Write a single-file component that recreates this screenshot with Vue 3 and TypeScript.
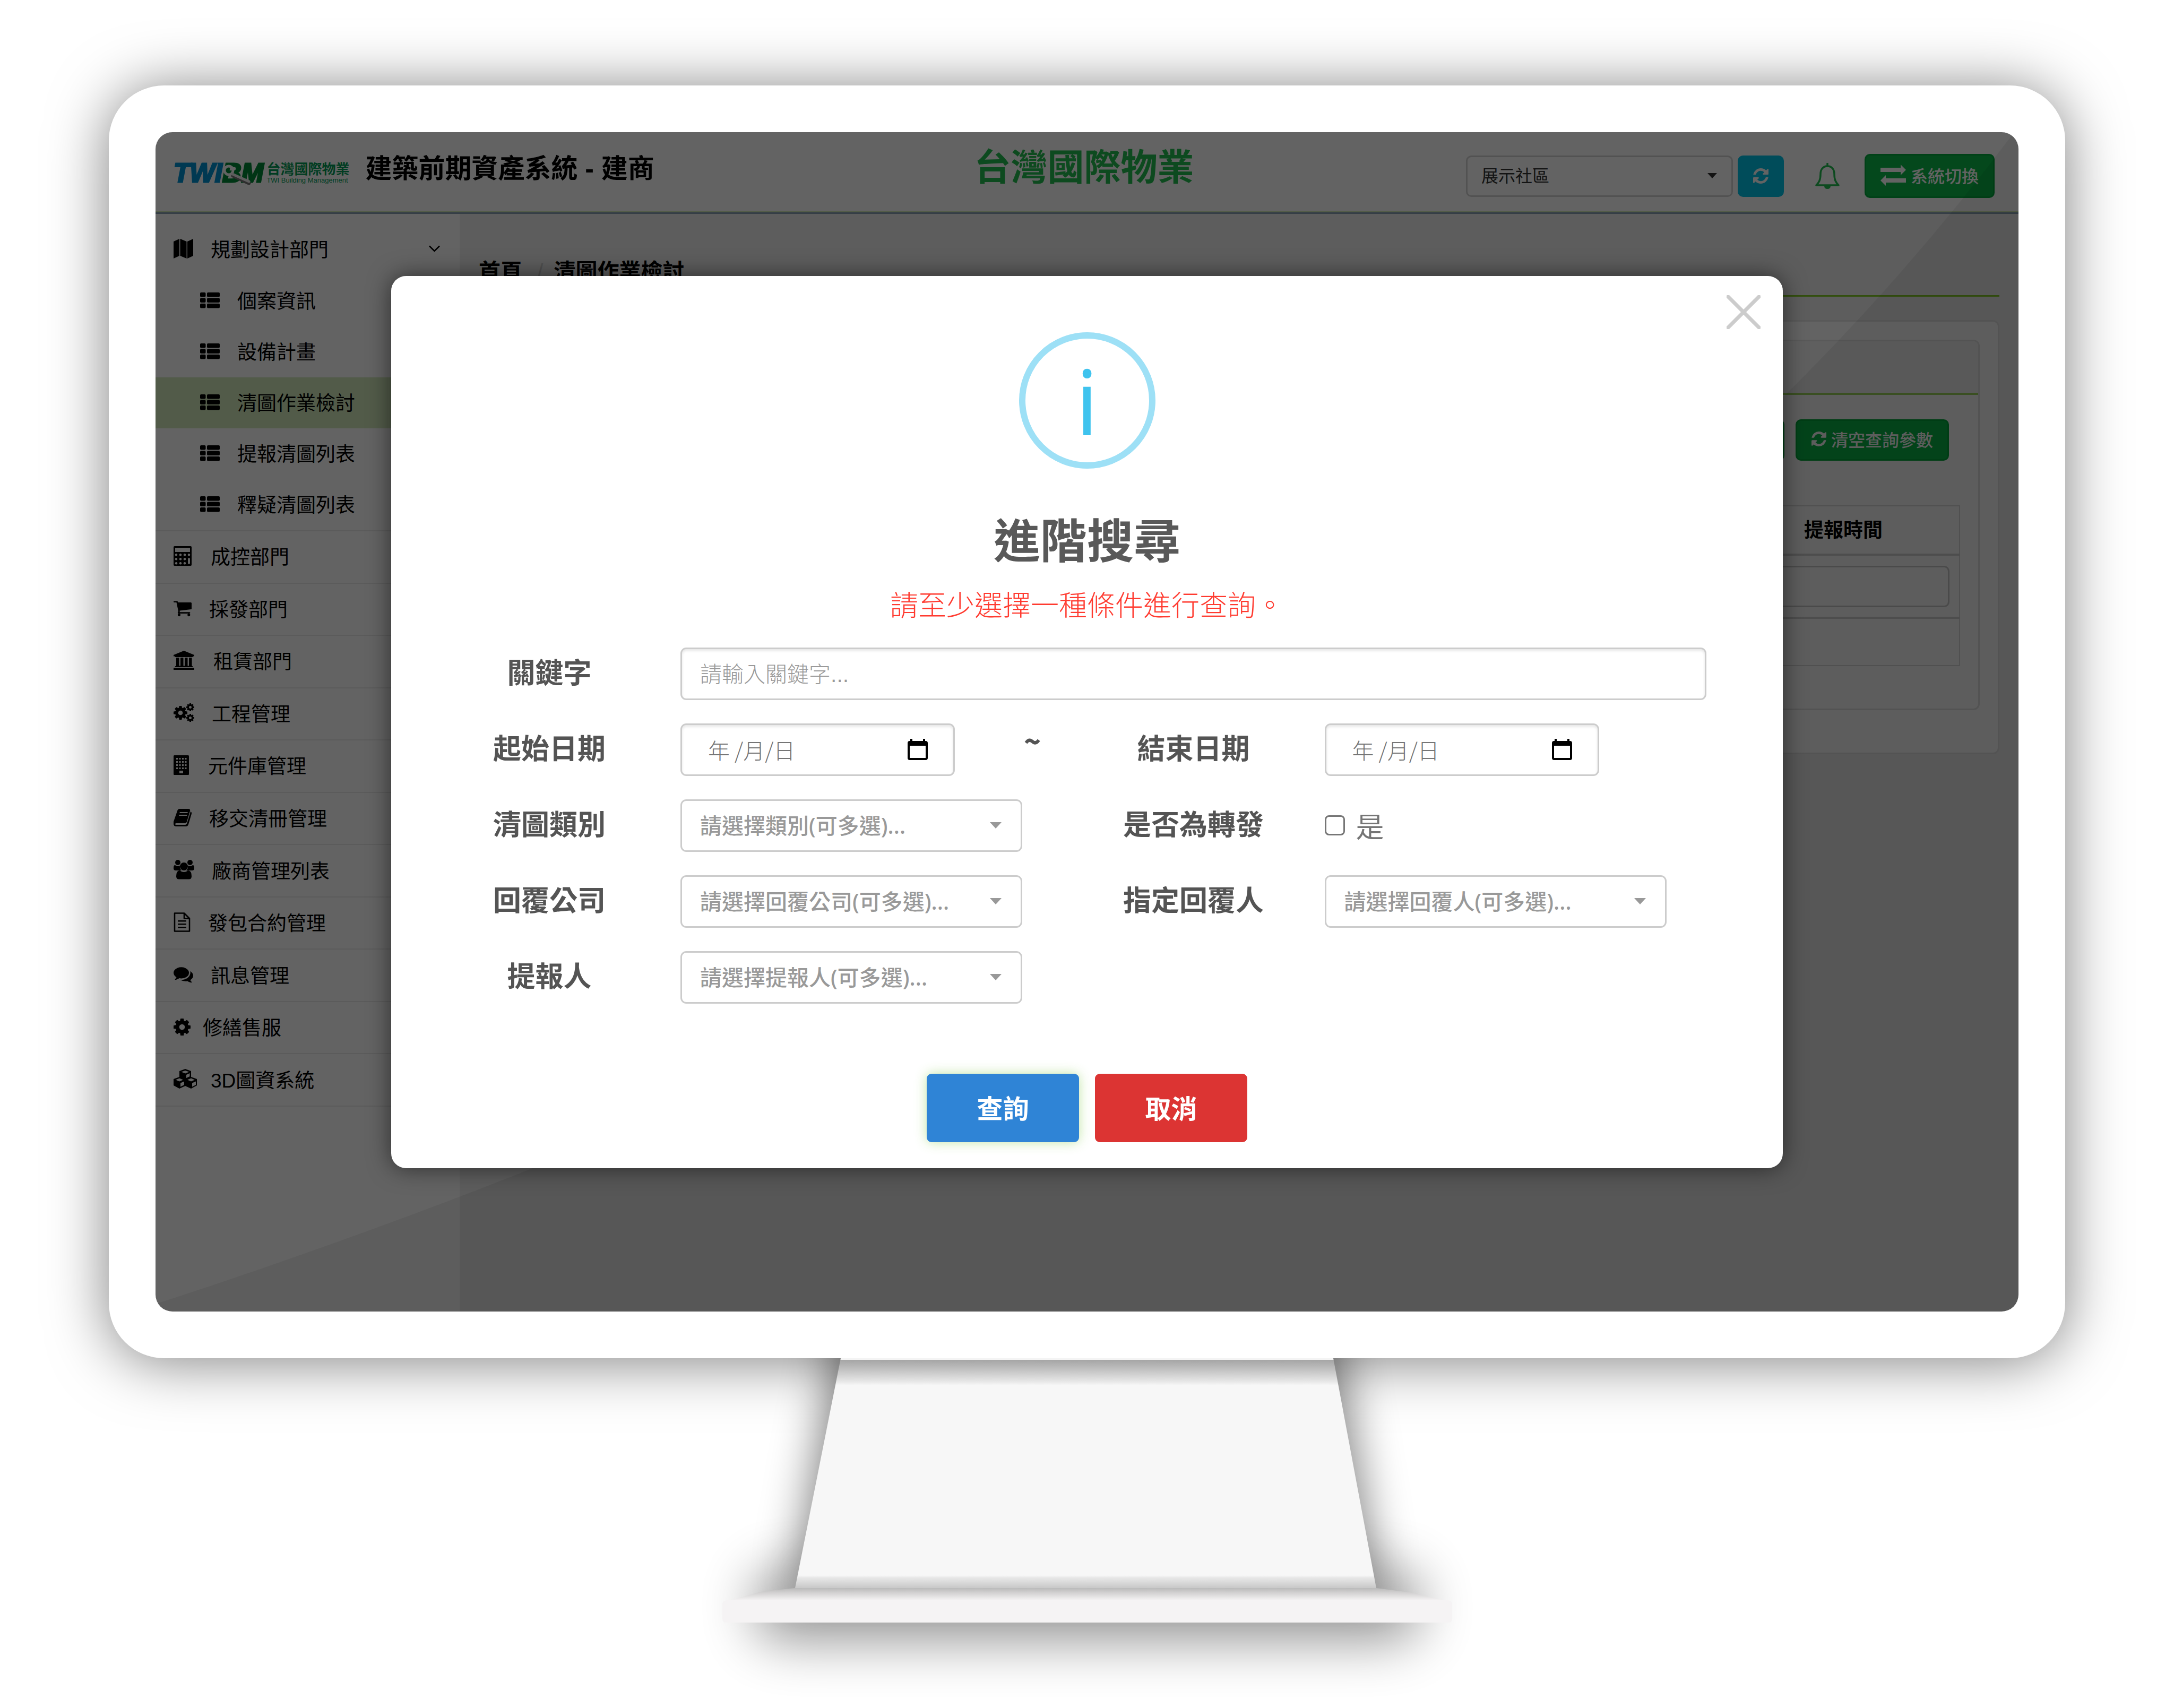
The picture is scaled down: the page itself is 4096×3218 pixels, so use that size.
<script setup lang="ts">
import { ref } from 'vue'

interface MenuItem {
  label: string
  icon: string
  width: number
  spacing?: 'wide' | 'tight' | 'snug'
}

const subItems = ['個案資訊', '設備計畫', '清圖作業檢討', '提報清圖列表', '釋疑清圖列表']
const activeItem = '清圖作業檢討'

const menuItems: MenuItem[] = [
  { label: '成控部門', icon: 'calculator', width: 34, spacing: 'wide' },
  { label: '採發部門', icon: 'cart', width: 34 },
  { label: '租賃部門', icon: 'bank', width: 39, spacing: 'wide' },
  { label: '工程管理', icon: 'cogs', width: 39 },
  { label: '元件庫管理', icon: 'building', width: 29, spacing: 'wide' },
  { label: '移交清冊管理', icon: 'book', width: 34 },
  { label: '廠商管理列表', icon: 'users', width: 39 },
  { label: '發包合約管理', icon: 'file', width: 32 },
  { label: '訊息管理', icon: 'comments', width: 37 },
  { label: '修繕售服', icon: 'cog', width: 32, spacing: 'tight' },
  { label: '3D圖資系統', icon: 'cubes', width: 44, spacing: 'snug' },
]

const keyword = ref('')
const startDate = ref('')
const endDate = ref('')
const forwarded = ref(false)
</script>

<template>
  <svg class="sprite" aria-hidden="true">
    <symbol id="i-map" viewBox="0 0 37 37">
      <path d="M0 5 11 0v32L0 37zM12.500 0l12 5v32l-12-5zM26 5l11-5v32l-11 5z" />
    </symbol>
    <symbol id="i-list" viewBox="0 0 37 37">
      <rect x="0" y="4" width="10.500" height="8.500" rx="2" /><rect x="13" y="4" width="24" height="8.500" rx="2" />
      <rect x="0" y="14.500" width="10.500" height="8.500" rx="2" /><rect x="13" y="14.500" width="24" height="8.500" rx="2" />
      <rect x="0" y="25" width="10.500" height="8.500" rx="2" /><rect x="13" y="25" width="24" height="8.500" rx="2" />
    </symbol>
    <symbol id="i-calculator" viewBox="0 0 34 37">
      <path fill-rule="evenodd" d="M2 0h30a2 2 0 0 1 2 2v33a2 2 0 0 1-2 2H2a2 2 0 0 1-2-2V2a2 2 0 0 1 2-2zM3 3v8h28V3zM5 14a2.300 2.300 0 1 0 .01 0zM13 14a2.300 2.300 0 1 0 .01 0zM21 14a2.300 2.300 0 1 0 .01 0zM29 14a2.300 2.300 0 1 0 .01 0zM5 22a2.300 2.300 0 1 0 .01 0zM13 22a2.300 2.300 0 1 0 .01 0zM21 22a2.300 2.300 0 1 0 .01 0zM27 24q0-2 2-2t2 2v8q0 2-2 2t-2-2zM5 30a2.300 2.300 0 1 0 .01 0zM13 30a2.300 2.300 0 1 0 .01 0zM21 30a2.300 2.300 0 1 0 .01 0z" />
    </symbol>
    <symbol id="i-cart" viewBox="64 0 1664 1792">
      <path d="M704 1536q0 52-38 90t-90 38-90-38-38-90 38-90 90-38 90 38 38 90zm896 0q0 52-38 90t-90 38-90-38-38-90 38-90 90-38 90 38 38 90zm128-1088v512q0 24-16.500 42.500t-40.500 21.500l-1044 122q13 60 13 70 0 16-24 64h920q26 0 45 19t19 45-19 45-45 19h-1024q-26 0-45-19t-19-45q0-11 8-31.500t16-36 21.500-40 15.500-29.500l-177-823h-204q-26 0-45-19t-19-45 19-45 45-19h256q16 0 28.500 6.500t19.500 15.500 13 24.500 8 26 5.500 29.500 4.500 26h1201q26 0 45 19t19 45z" />
    </symbol>
    <symbol id="i-bank" viewBox="0 0 39 37">
      <path d="M19.500 0 39 8v2.500h-2.500q0 1.500-1.500 1.500H4q-1.500 0-1.500-1.500H0V8zM5 13h5.500v15.500H13V13h5.500v15.500H21V13h5.500v15.500H29V13h5.500v15.500q2 0 2 2.500h-34q0-2.500 2.500-2.500zM0 32.500h39V36H0z" />
    </symbol>
    <symbol id="i-gear" viewBox="128 128 1536 1536">
      <path d="M1152 896q0-106-75-181t-181-75-181 75-75 181 75 181 181 75 181-75 75-181zm512-109v222q0 12-8 23t-20 13l-185 28q-19 54-39 91 35 50 107 138 10 12 10 25t-9 23q-27 37-99 108t-94 71q-12 0-26-9l-138-108q-44 23-91 38-16 136-29 186-7 28-36 28h-222q-14 0-24.500-8.500t-11.500-21.500l-28-184q-49-16-90-37l-141 107q-10 9-25 9-14 0-25-11-126-114-165-168-7-10-7-23 0-12 8-23 15-21 51-66.500t54-70.500q-27-50-41-99l-183-27q-13-2-21-12.500t-8-23.500v-222q0-12 8-23t19-13l186-28q14-46 39-92-40-57-107-138-10-12-10-24 0-10 9-23 26-36 98.500-107.500t94.500-71.500q13 0 26 10l138 107q44-23 91-38 16-136 29-186 7-28 36-28h222q14 0 24.500 8.500t11.500 21.500l28 184q49 16 90 37l142-107q9-9 24-9 13 0 25 10 129 119 165 170 7 8 7 22 0 12-8 23-15 21-51 66.500t-54 70.500q26 50 41 98l183 28q13 2 21 12.500t8 23.500z" />
    </symbol>
    <symbol id="i-cog" viewBox="0 0 32 37"><use href="#i-gear" x="0" y="3" width="32" height="32" /></symbol>
    <symbol id="i-cogs" viewBox="0 0 39 37">
      <use href="#i-gear" x="0" y="6" width="26" height="26" />
      <use href="#i-gear" x="24" y="1" width="15" height="15" />
      <use href="#i-gear" x="24" y="21" width="15" height="15" />
    </symbol>
    <symbol id="i-building" viewBox="0 0 29 37">
      <path fill-rule="evenodd" d="M1.500 0h26Q29 0 29 1.500v34q0 1.500-1.500 1.500h-26Q0 37 0 35.500v-34Q0 0 1.500 0zM5 5v3h3V5zM10.500 5v3h3V5zM16 5v3h3V5zM21.500 5v3h3V5zM5 11v3h3v-3zM10.500 11v3h3v-3zM16 11v3h3v-3zM21.500 11v3h3v-3zM5 17v3h3v-3zM10.500 17v3h3v-3zM16 17v3h3v-3zM21.500 17v3h3v-3zM5 23v3h3v-3zM10.500 23v3h3v-3zM16 23v3h3v-3zM21.500 23v3h3v-3zM11 29v5h7v-5z" />
    </symbol>
    <symbol id="i-book" viewBox="0 0 34 37">
      <path fill-rule="evenodd" d="M11 3h17q4 0 3 4l-6 20q-1 3-4 3H5q-2 0-2 1.500T5 33h17q2 0 3-2l6-19 1-4q3 2 2 4l-6 20q-1 4-5 4H5q-5 0-5-5v-4L7 7q1-4 4-4zm1 6-1 2h15l1-2zm-1 5-1 2h15l1-2z" />
    </symbol>
    <symbol id="i-users" viewBox="0 0 39 37">
      <circle cx="8" cy="5" r="5" /><circle cx="31" cy="5" r="5" /><circle cx="19.500" cy="12.500" r="7.500" />
      <path d="M3 10q2 2 5 2l4-1q-1 5 3 9H4q-4 0-4-4 0-7 3-6zM36 10q-2 2-5 2l-4-1q1 5-3 9h11q4 0 4-4 0-7-3-6zM12 20q3 3 7.500 3t7.500-3q7 0 7 11 0 5.500-5 5.500H10q-5 0-5-5.500 0-11 7-11z" />
    </symbol>
    <symbol id="i-file" viewBox="0 0 32 37">
      <path fill="none" stroke="currentColor" stroke-width="2.600" stroke-linejoin="round" d="M2 1.500h18l10 10v24H2zM20 1.500v10h10" />
      <path d="M8 15h16v2.500H8zM8 21h16v2.500H8zM8 27h16v2.500H8z" />
    </symbol>
    <symbol id="i-comments" viewBox="0 0 1792 1792">
      <path d="M1408 768q0 139-94 257t-256.500 186.500-353.500 68.500q-86 0-176-16-124 88-278 128-36 9-86 16h-3q-11 0-20.500-8t-11.500-21q-1-3-1-6.500t.5-6.500 2-6l2.500-5 3.500-5.500 4-5 4.500-5 4-4.500q5-6 23-25t26-29.500 22.500-29 25-38.500 20.500-44q-124-72-195-177t-71-224q0-139 94-257t256.500-186.500 353.500-68.500 353.500 68.500 256.500 186.500 94 257zm384 256q0 120-71 224.500t-195 176.500q10 24 20.500 44t25 38.500 22.500 29 26 29.500 23 25q1 1 4 4.500t4.500 5 4 5 3.500 5.500l2.500 5 2 6 .5 6.500-1 6.500q-3 14-13 22t-22 7q-50-7-86-16-154-40-278-128-90 16-176 16-271 0-472-132 58 4 88 4 161 0 309-45t264-129q125-92 192-212t67-254q0-77-23-152 129 71 204 178t75 230z" />
    </symbol>
    <symbol id="i-cubes" viewBox="0 0 44 37">
      <path fill-rule="evenodd" d="M22 0 33 4v11l11 4v12l-11 6-11-5-11 5-11-6V19l11-4V4zM14.500 5.500 22 8.500l7.500-3L22 3zM24 11v6l6.500-3V8zM4 20.500l7 3 7-3-7-3zM13 26.500v7l7-3.500v-6.500zM26 20.500l7 3 7-3-7-3zM35 26.500v7l7-3.500v-6.500z" />
    </symbol>
    <symbol id="i-refresh" viewBox="128 128 1536 1536">
      <path d="M1639 1056q0 5-1 7-64 268-268 434.500t-478 166.500q-146 0-282.500-55t-243.500-157l-129 129q-19 19-45 19t-45-19-19-45v-448q0-26 19-45t45-19h448q26 0 45 19t19 45-19 45l-137 137q71 66 161 102t187 36q134 0 250-65t186-179q11-17 53-117 8-23 30-23h192q13 0 22.500 9.500t9.500 22.500zm25-800v448q0 26-19 45t-45 19h-448q-26 0-45-19t-19-45 19-45l138-138q-148-137-349-137-134 0-250 65t-186 179q-11 17-53 117-8 23-30 23h-199q-13 0-22.500-9.500t-9.500-22.500v-7q65-268 270-434.500t480-166.500q146 0 284 55.500t245 156.500l130-129q19-19 45-19t45 19 19 45z" />
    </symbol>
    <symbol id="i-caret" viewBox="0 0 22 12"><path d="M0 0h22L11 12z" /></symbol>
    <symbol id="i-calendar" viewBox="0 0 38 40">
      <path fill-rule="evenodd" d="M5 0h4v4h20V0h4v4h1q4 0 4 4v28q0 4-4 4H4q-4 0-4-4V8q0-4 4-4h1zM4 13v23h30V13z" />
    </symbol>
  </svg>

  <main class="scene" lang="zh-Hant">
    <section class="monitor">
      <div class="screen">
        <header class="topbar">
          <div class="topbar-left">
            <a class="logo" href="#" aria-label="TWIBM">
              <span class="logo-mark">
                <span class="logo-blue">TWI</span><span class="logo-green">BM</span>
                <svg class="magnifier" viewBox="0 0 60 46">
                  <path d="M20 26 50 40" stroke="#777" stroke-width="7" stroke-linecap="round" />
                  <circle cx="12" cy="16" r="8" fill="none" stroke="#fff" stroke-width="5" />
                  <path d="M19 23 50 37" stroke="#f0f0f0" stroke-width="5" stroke-linecap="round" />
                </svg>
              </span>
              <span class="logo-text">
                <span class="logo-name">台灣國際物業</span>
                <span class="logo-sub">TWI Building Management</span>
              </span>
            </a>
            <h1 class="app-title">建築前期資產系統 - 建商</h1>
          </div>
          <p class="brand">台灣國際物業</p>
          <div class="topbar-right">
            <span class="select-wrap community">
              <select aria-label="社區">
                <option>展示社區</option>
              </select>
              <svg class="caret"><use href="#i-caret" /></svg>
            </span>
            <button class="btn-refresh" type="button" aria-label="重新整理">
              <svg width="29" height="29"><use href="#i-refresh" /></svg>
            </button>
            <button class="btn-bell" type="button" aria-label="通知">
              <svg width="46" height="50" viewBox="0 0 46 50">
                <path d="M23 1v5M23 6C14 6 10 13 10 21c0 11-3 16-8 21h42c-5-5-8-10-8-21 0-8-4-15-13-15z" fill="none" stroke="currentColor" stroke-width="3.500" stroke-linecap="round" stroke-linejoin="round" />
                <path d="M17 43h12q0 6-6 6t-6-6z" />
              </svg>
            </button>
            <button class="btn-green btn-switch" type="button">
              <svg width="48" height="40" viewBox="0 0 48 40"><path d="M0 6h38V0l10 10-10 10v-6H0zM48 26H10v-6L0 30l10 10v-6h38z" /></svg>
              系統切換
            </button>
          </div>
        </header>

        <div class="body">
          <nav class="sidebar">
            <a class="menu-link menu-head" href="#">
              <svg width="37" height="37"><use href="#i-map" /></svg>
              <span>規劃設計部門</span>
              <svg class="chevron" width="21" height="13" viewBox="0 0 21 13">
                <path d="M1 1.500 10.500 11 20 1.500" fill="none" stroke="currentColor" stroke-width="2.500" />
              </svg>
            </a>
            <ul class="submenu">
              <li v-for="item in subItems" :key="item">
                <a class="menu-link sub-link" :class="{ active: item === activeItem }" href="#">
                  <svg width="37" height="37"><use href="#i-list" /></svg>
                  <span>{{ item }}</span>
                </a>
              </li>
            </ul>
            <ul class="menu">
              <li v-for="item in menuItems" :key="item.label">
                <a class="menu-link" :class="item.spacing" href="#">
                  <svg :width="item.width" height="37"><use :href="`#i-${item.icon}`" /></svg>
                  <span>{{ item.label }}</span>
                </a>
              </li>
            </ul>
          </nav>

          <div class="content">
            <div class="breadcrumb">
              <a href="#">首頁</a><span class="slash">/</span><span>清圖作業檢討</span>
            </div>
            <div class="card">
              <div class="panel">
                <div class="panel-head"></div>
                <div class="panel-body">
                  <div class="actions">
                    <button class="btn-green btn-action btn-blank" type="button" aria-label="進階"></button>
                    <button class="btn-green btn-action" type="button">
                      <svg width="28" height="28"><use href="#i-refresh" /></svg>
                      清空查詢參數
                    </button>
                  </div>
                  <table class="grid-table">
                    <thead>
                      <tr><th></th><th class="time-col">提報時間</th></tr>
                    </thead>
                    <tbody>
                      <tr class="filter-row"><td></td><td><input type="text" aria-label="提報時間" /></td></tr>
                      <tr class="empty-row"><td></td><td></td></tr>
                    </tbody>
                  </table>
                </div>
              </div>
            </div>
          </div>
        </div>

        <div class="backdrop">
          <svg class="sheen" viewBox="0 0 3509 2223" preserveAspectRatio="none" aria-hidden="true">
            <path d="M3501 0Q2450 1410 0 2209v14h3509V0z" />
          </svg>
          <div class="modal" role="dialog" aria-labelledby="dialog-title">
            <button class="close" type="button" aria-label="關閉">
              <svg width="64" height="64" viewBox="0 0 64 64"><path d="M3 3 61 61M61 3 3 61" stroke="currentColor" stroke-width="7" stroke-linecap="round" /></svg>
            </button>
            <div class="info-ring"><span>i</span></div>
            <h2 id="dialog-title">進階搜尋</h2>
            <p class="hint">請至少選擇一種條件進行查詢。</p>

            <form class="form" @submit.prevent>
              <label class="label" for="keyword">關鍵字</label>
              <div class="field full">
                <input id="keyword" v-model="keyword" class="control" type="text" placeholder="請輸入關鍵字..." />
              </div>

              <label class="label" for="start">起始日期</label>
              <div class="field">
                <span class="date-wrap">
                  <input id="start" v-model="startDate" class="control date" type="text" placeholder="年 /月/日" />
                  <svg class="calendar"><use href="#i-calendar" /></svg>
                </span>
                <b class="tilde">~</b>
              </div>
              <label class="label" for="end">結束日期</label>
              <div class="field">
                <span class="date-wrap">
                  <input id="end" v-model="endDate" class="control date" type="text" placeholder="年 /月/日" />
                  <svg class="calendar"><use href="#i-calendar" /></svg>
                </span>
              </div>

              <label class="label" for="category">清圖類別</label>
              <div class="field">
                <span class="select-wrap">
                  <select id="category" class="control"><option>請選擇類別(可多選)...</option></select>
                  <svg class="caret"><use href="#i-caret" /></svg>
                </span>
              </div>
              <span class="label">是否為轉發</span>
              <div class="field">
                <label class="check"><input v-model="forwarded" type="checkbox" /><span>是</span></label>
              </div>

              <label class="label" for="company">回覆公司</label>
              <div class="field">
                <span class="select-wrap">
                  <select id="company" class="control"><option>請選擇回覆公司(可多選)...</option></select>
                  <svg class="caret"><use href="#i-caret" /></svg>
                </span>
              </div>
              <label class="label" for="replier">指定回覆人</label>
              <div class="field">
                <span class="select-wrap">
                  <select id="replier" class="control"><option>請選擇回覆人(可多選)...</option></select>
                  <svg class="caret"><use href="#i-caret" /></svg>
                </span>
              </div>

              <label class="label" for="reporter">提報人</label>
              <div class="field">
                <span class="select-wrap">
                  <select id="reporter" class="control"><option>請選擇提報人(可多選)...</option></select>
                  <svg class="caret"><use href="#i-caret" /></svg>
                </span>
              </div>
            </form>

            <div class="dialog-actions">
              <button class="confirm" type="button">查詢</button>
              <button class="cancel" type="button">取消</button>
            </div>
          </div>
        </div>
      </div>
    </section>

    <svg class="stand" viewBox="0 0 1375 498" aria-hidden="true">
      <defs>
        <linearGradient id="neck" x1="0" y1="0" x2="0" y2="433" gradientUnits="userSpaceOnUse">
          <stop offset="0" stop-color="#f4f4f4" />
          <stop offset="0.006" stop-color="#f4f4f4" />
          <stop offset="0.007" stop-color="#a5a5a5" />
          <stop offset="0.045" stop-color="#bebebe" />
          <stop offset="0.1" stop-color="#e6e6e6" />
          <stop offset="0.118" stop-color="#f7f7f7" />
          <stop offset="0.945" stop-color="#f7f7f7" />
          <stop offset="0.955" stop-color="#e8e8e8" />
          <stop offset="1" stop-color="#c8c8c8" />
        </linearGradient>
        <linearGradient id="foot" x1="0" y1="433" x2="0" y2="456" gradientUnits="userSpaceOnUse">
          <stop offset="0" stop-color="#bababa" />
          <stop offset="0.35" stop-color="#d0cfcf" />
          <stop offset="1" stop-color="#f5f3f4" />
        </linearGradient>
        <filter id="soft" x="-30%" y="-60%" width="160%" height="250%">
          <feGaussianBlur stdDeviation="42" />
        </filter>
        <filter id="softer" x="-30%" y="-150%" width="160%" height="400%">
          <feGaussianBlur stdDeviation="50" />
        </filter>
      </defs>
      <path d="M223-80h928l81 513H137z" filter="url(#soft)" opacity="0.5" />
      <rect x="60" y="400" width="1255" height="134" rx="50" filter="url(#softer)" opacity="0.4" />
      <path d="M223 0h928l81 433H137z" fill="url(#neck)" />
      <path d="M137 433h1095l62 8 60 13 21 9H0l30-11 42-12z" fill="url(#foot)" />
      <path d="M0 464q0-8 10-8h1355q10 0 10 8v26q0 8-6 8H6q-6 0-6-8z" fill="#f5f3f4" />
    </svg>
  </main>
</template>

<style>
html,
body {
  background: #fff;
}
</style>

<style scoped>
* {
  box-sizing: border-box;
}
button,
input,
select {
  font: inherit;
  color: inherit;
  margin: 0;
}
button {
  border: 0;
  padding: 0;
  cursor: pointer;
}
svg {
  display: block;
  fill: currentColor;
  flex: none;
}
ul {
  list-style: none;
  margin: 0;
  padding: 0;
}
a {
  color: inherit;
  text-decoration: none;
}
.sprite {
  position: absolute;
  width: 0;
  height: 0;
}
.scene {
  display: flex;
  flex-direction: column;
  min-height: 100vh;
  padding: 161px 205px;
  overflow: hidden;
  font-family: "Liberation Sans", "Noto Sans CJK TC", sans-serif;
  color: #000;
}
.monitor {
  flex: 1;
  display: flex;
  padding: 88px;
  border-radius: 104px;
  background: #fff;
  box-shadow: 0 6px 112px rgba(0, 0, 0, 0.5);
}
.screen {
  position: relative;
  flex: 1;
  display: flex;
  flex-direction: column;
  border-radius: 32px;
  overflow: hidden;
  background: #f0f0f0;
}

/* top bar */
.topbar {
  display: grid;
  grid-template-columns: 1fr auto 1fr;
  height: 154px;
  padding: 0 45px 0 34px;
  background: #fff;
  border-bottom: 3px solid #8aa0b4;
  box-shadow: inset 0 -2px 0 #d6ecb8;
}
.topbar-left {
  display: flex;
  align-items: center;
  gap: 30px;
  padding-bottom: 24px;
}
.logo {
  display: flex;
  gap: 6px;
  padding-top: 26px;
}
.logo-mark {
  position: relative;
  display: flex;
  font-size: 50px;
  font-weight: 700;
  font-style: italic;
  line-height: 42px;
  -webkit-text-stroke: 3px currentColor;
}
.logo-blue {
  color: #0092d4;
}
.logo-green {
  color: #008a38;
}
.magnifier {
  position: absolute;
  left: 92px;
  top: 0;
  width: 60px;
  height: 46px;
}
.logo-text {
  display: flex;
  flex-direction: column;
  color: #009a55;
}
.logo-name {
  font-size: 26px;
  font-weight: 700;
  line-height: 28px;
}
.logo-sub {
  font-size: 13px;
  line-height: 14px;
}
.app-title {
  margin: 0;
  font-size: 50px;
  font-weight: 700;
  white-space: nowrap;
}
.brand {
  margin: 0;
  align-self: center;
  padding-bottom: 16px;
  font-size: 69px;
  font-weight: 700;
  line-height: 80px;
  color: #22be50;
}
.topbar-right {
  display: flex;
  align-items: center;
  justify-content: flex-end;
  padding-top: 14px;
}
.select-wrap {
  position: relative;
  display: block;
  width: 644px;
  color: #999;
}
.select-wrap select {
  display: block;
  width: 100%;
  appearance: none;
}
.caret {
  position: absolute;
  right: 39px;
  top: 50%;
  width: 22px;
  height: 12px;
  margin-top: -6px;
}
.community {
  width: 503px;
  color: #333;
}
.community select {
  height: 78px;
  padding: 0 26px;
  border: 3px solid #d2d2d2;
  border-radius: 10px;
  background: #fff;
  font-size: 32px;
}
.community .caret {
  right: 30px;
  width: 18px;
  height: 10px;
}
.btn-refresh {
  display: grid;
  place-items: center;
  width: 87px;
  height: 78px;
  margin-left: 9px;
  border-radius: 10px;
  background: #00c4e8;
  color: #fff;
}
.btn-bell {
  margin: 0 47px 0 59px;
  background: none;
  color: #22be50;
}
.btn-green {
  display: flex;
  align-items: center;
  justify-content: center;
  padding-bottom: 4px;
  border: 3px solid #00a83c;
  border-radius: 10px;
  background: #0cb948;
  color: #fff;
  font-size: 32px;
  font-weight: 500;
  white-space: nowrap;
}
.btn-switch {
  width: 245px;
  height: 83px;
  gap: 9px;
}

/* body */
.body {
  flex: 1;
  display: flex;
}
.sidebar {
  width: 573px;
  padding-top: 18px;
  background: #fff;
  font-size: 37px;
}
.menu-link {
  display: flex;
  align-items: center;
  gap: 33px;
  height: 100%;
  padding: 0 37px 4px 34px;
}
.wide {
  gap: 36px;
}
.snug {
  gap: 26px;
}
.tight {
  gap: 23px;
}
.menu-head {
  height: 98px;
}
.chevron {
  margin-left: auto;
}
.submenu li {
  height: 96px;
}
.sub-link {
  padding-left: 84px;
}
.active {
  background: #d2ebbc;
}
.menu {
  display: grid;
  grid-auto-rows: 1fr;
  min-height: 1086px;
  border-top: 2px solid #eaeaea;
}
.menu li {
  border-bottom: 2px solid #eaeaea;
}
.content {
  flex: 1;
  padding: 76px 36px 0;
}
.breadcrumb {
  display: flex;
  height: 80px;
  border-bottom: 3px solid #84cc28;
  font-size: 41px;
  font-weight: 700;
  line-height: 66px;
}
.slash {
  padding: 0 20px 0 28px;
  color: #ccc;
  font-weight: 400;
}
.card {
  margin-top: 44px;
  padding: 34px 34px 80px;
  border: 3px solid #e6e6e6;
  border-radius: 12px;
  background: #fff;
}
.panel {
  border: 3px solid #e4e4e4;
  border-radius: 12px;
}
.panel-head {
  height: 101px;
  border-bottom: 4px solid #a0d860;
  border-radius: 9px 9px 0 0;
  background: #f5f5f5;
}
.panel-body {
  padding: 46px 34px 80px;
}
.actions {
  display: flex;
  justify-content: flex-end;
  gap: 21px;
  padding-right: 21px;
}
.btn-action {
  width: 289px;
  height: 78px;
  gap: 9px;
}
.btn-blank {
  width: 200px;
}
.grid-table {
  width: 100%;
  margin-top: 84px;
  border-collapse: collapse;
}
.grid-table th,
.grid-table td {
  padding: 0 18px;
  border: 2px solid #dcdcdc;
}
.grid-table th {
  height: 92px;
  padding-bottom: 6px;
  border-bottom: 4px solid #d4d4d4;
  font-size: 37px;
}
.grid-table .time-col {
  width: 438px;
}
.filter-row {
  height: 119px;
}
.filter-row td {
  border-bottom: 4px solid #d4d4d4;
}
.filter-row input {
  display: block;
  width: 100%;
  height: 78px;
  border: 3px solid #ccc;
  border-radius: 10px;
  background: #fff;
}
.empty-row {
  height: 90px;
}

/* dialog */
.backdrop {
  position: absolute;
  inset: 0;
  display: grid;
  place-items: center;
  background: rgba(0, 0, 0, 0.61);
}
.sheen {
  position: absolute;
  inset: 0;
  width: 100%;
  height: 100%;
  fill: rgba(0, 0, 0, 0.06);
}
.modal {
  position: relative;
  width: calc(100% - 888px);
  padding: 106px 95px 49px;
  border-radius: 28px;
  background: #fff;
  box-shadow: 0 0 44px rgba(0, 0, 0, 0.55);
}
.close {
  position: absolute;
  top: 36px;
  right: 42px;
  background: none;
  color: #ccc;
}
.info-ring {
  display: flex;
  align-items: center;
  justify-content: center;
  width: 257px;
  height: 257px;
  margin: 0 auto;
  border: 12px solid #9de0f6;
  border-radius: 50%;
  color: #3fc3ee;
  font-family: "Open Sans", sans-serif;
  font-size: 170px;
  font-weight: 500;
  line-height: 232px;
}
.modal h2 {
  margin: 78px 0 0;
  font-size: 88px;
  font-weight: 700;
  line-height: 120px;
  text-align: center;
  color: #595959;
}
.hint {
  margin: 21px 0 38px;
  font-size: 53px;
  font-weight: 300;
  line-height: 80px;
  text-align: center;
  color: #ff3b30;
}
.form {
  display: grid;
  grid-template-columns: 406px 1fr 406px 1fr;
  gap: 44px;
  margin-right: 49px;
}
.label {
  align-self: center;
  text-align: center;
  font-size: 53px;
  font-weight: 700;
  line-height: 70px;
  color: #545454;
}
.field {
  display: flex;
  align-items: center;
  height: 99px;
}
.full {
  grid-column: 2 / -1;
}
.control {
  width: 100%;
  height: 99px;
  padding: 0 34px;
  border: 3px solid #ccc;
  border-radius: 11px;
  background: #fff;
  font-size: 41px;
}
select.control {
  font-family: "Noto Sans", "Noto Sans CJK TC", sans-serif;
  font-weight: 500;
}
input.control {
  padding-top: 4px;
  box-shadow: inset 0 3px 5px rgba(0, 0, 0, 0.1);
  font-weight: 300;
}
.control::placeholder {
  color: #999;
  opacity: 1;
}
.date-wrap {
  position: relative;
  width: 517px;
}
input.date {
  display: block;
  padding: 0 49px;
  font-family: "Noto Sans CJK TC", sans-serif;
}
.date::placeholder {
  color: #757575;
}
.calendar {
  position: absolute;
  right: 51px;
  top: 29px;
  width: 38px;
  height: 40px;
  color: #000;
}
.tilde {
  margin: 0 0 36px 130px;
  font-family: "Noto Sans CJK TC", sans-serif;
  font-size: 53px;
  font-weight: 900;
  line-height: 60px;
  color: #545454;
}
.check {
  display: flex;
  align-items: center;
  gap: 21px;
  font-size: 53px;
  color: #757575;
}
.check input {
  width: 38px;
  height: 38px;
  appearance: none;
  border: 3px solid #767676;
  border-radius: 8px;
  background: #fff;
}
.dialog-actions {
  display: flex;
  justify-content: center;
  gap: 30px;
  margin-top: 132px;
}
.dialog-actions button {
  width: 287px;
  height: 129px;
  padding-bottom: 4px;
  border-radius: 9px;
  color: #fff;
  font-size: 49px;
  font-weight: 700;
}
.confirm {
  background: #2f84d6;
  box-shadow: 0 0 22px rgba(120, 200, 60, 0.45);
}
.cancel {
  background: #dc3433;
}

/* stand */
.stand {
  align-self: center;
  width: 1375px;
  height: 498px;
  overflow: visible;
  clip-path: inset(0 -300px -300px -300px);
}
</style>
